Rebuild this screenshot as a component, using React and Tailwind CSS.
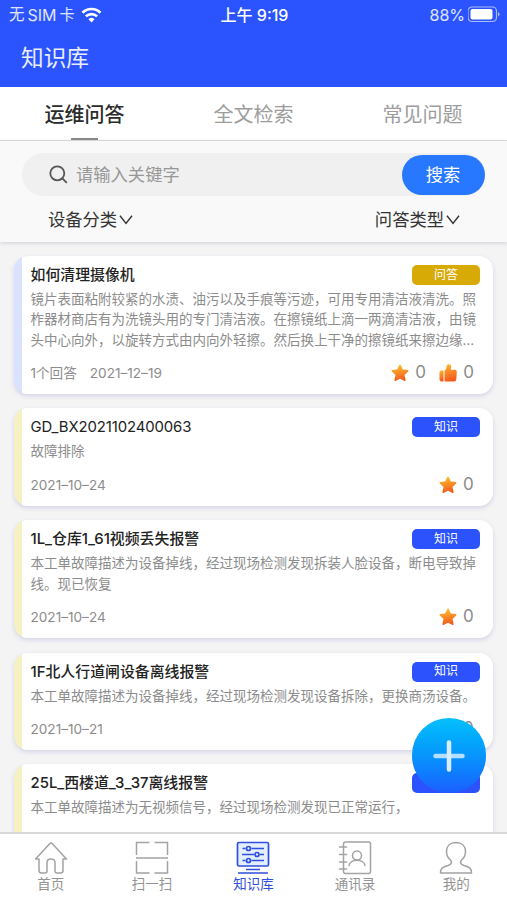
import React, { useState } from "react";

const FONT = "font-['Inter','Noto_Sans_CJK_SC',sans-serif]";

const tabs = ["运维问答", "全文检索", "常见问题"];

const records = [
  {
    title: "如何清理摄像机",
    body: "镜片表面粘附较紧的水渍、油污以及手痕等污迹，可用专用清洁液清洗。照\n柞器材商店有为洗镜头用的专门清洁液。在擦镜纸上滴一两滴清洁液，由镜\n头中心向外，以旋转方式由内向外轻擦。然后换上干净的擦镜纸来擦边缘…",
    date: "2021–12–19",
    answers: "1个回答",
    type: "问答",
    stars: 0,
    likes: 0,
  },
  {
    title: "GD_BX2021102400063",
    body: "故障排除",
    date: "2021–10–24",
    type: "知识",
    stars: 0,
  },
  {
    title: "1L_仓库1_61视频丢失报警",
    body: "本工单故障描述为设备掉线，经过现场检测发现拆装人脸设备，断电导致掉\n线。现已恢复",
    date: "2021–10–24",
    type: "知识",
    stars: 0,
  },
  {
    title: "1F北人行道闸设备离线报警",
    body: "本工单故障描述为设备掉线，经过现场检测发现设备拆除，更换商汤设备。",
    date: "2021–10–21",
    type: "知识",
    stars: 0,
  },
  {
    title: "25L_西楼道_3_37离线报警",
    body: "本工单故障描述为无视频信号，经过现场检测发现已正常运行，",
    type: "知识",
  },
];

function StarIcon() {
  return (
    <svg width="18" height="18" viewBox="0 0 18 18">
      <defs>
        <linearGradient id="star" x1="0" y1="0" x2="0.2" y2="1">
          <stop offset="0.1" stopColor="#fcbb30" />
          <stop offset="1" stopColor="#f4601c" />
        </linearGradient>
      </defs>
      <path
        d="M9 1.300l2.200 4.900 5.400.7-4 3.700 1.200 5.600L9 13.700l-4.800 2.500 1.200-5.600-4-3.700 5.400-.7z"
        fill="url(#star)"
        stroke="url(#star)"
        strokeWidth="1.700"
        strokeLinejoin="round"
      />
    </svg>
  );
}

function ThumbIcon() {
  return (
    <svg width="18" height="18" viewBox="0 0 18 18">
      <defs>
        <linearGradient id="thumb" x1="0" y1="0" x2="0.2" y2="1">
          <stop offset="0.1" stopColor="#fbb030" />
          <stop offset="1" stopColor="#f65a1a" />
        </linearGradient>
      </defs>
      <g fill="url(#thumb)">
        <path d="M2 6.500H4.500V17.500H2.500Q.5 17.500 .5 15.500V8Q.5 6.500 2 6.500z" />
        <path d="M5.500 6.500Q7.600 4.800 7.600 2.200Q7.700 .2 9.600 .2Q12.300 .3 12.100 3.300Q12 4.600 11.700 5.800H16Q17.900 5.900 17.800 7.800L17.300 15.400Q17 17.500 15 17.500H5.500z" />
      </g>
    </svg>
  );
}

function Chevron() {
  return (
    <svg width="14" height="10" viewBox="0 0 14 10" fill="none" stroke="#333" strokeWidth="1.400">
      <path d="M1 .8l6 7.600L13 .8" />
    </svg>
  );
}

function StatusBar() {
  return (
    <div className="grid h-[30px] grid-cols-3 items-center pl-[9px] pr-[6px] text-[16px] text-white/85">
      <div className="flex items-center whitespace-nowrap">
        <span className="text-[15.500px]">无</span>
        <span className="ml-[3px]">SIM</span>
        <span className="ml-[3px] text-[15px]">卡</span>
        <svg className="ml-[6px]" width="21" height="16" viewBox="0 0 21 16" fill="none" stroke="#fff" strokeWidth="2.700">
          <path d="M1.500 5.800a12.600 12.600 0 0 1 18 0" />
          <path d="M4.900 9.400a7.900 7.900 0 0 1 11.200 0" />
          <path d="M10.500 15.500l-3-3.300a4.300 4.300 0 0 1 6 0z" fill="#fff" stroke="none" />
        </svg>
      </div>
      <div className="pr-px text-center font-medium text-white">上午 9:19</div>
      <div className="flex items-center justify-end">
        <span>88%</span>
        <svg className="ml-[3px] mb-px" width="33" height="17" viewBox="0 0 33 17">
          <rect x="0" y="1" width="28.500" height="14.500" rx="4" fill="none" stroke="#a9baff" strokeWidth="1.200" />
          <rect x="2.500" y="3" width="22" height="10.500" rx="2" fill="#fff" />
          <path d="M30 6v4.500q1.500-.7 1.500-2.200t-1.500-2.300z" fill="#a9baff" />
        </svg>
      </div>
    </div>
  );
}

function RecordCard({ item }) {
  const isQuestion = item.type === "问答";
  const isCode = /^\w+$/.test(item.title);

  return (
    <div
      className={`shrink-0 overflow-hidden rounded-[14px] pl-[8px] shadow-[0_2px_4px_rgba(170,170,215,0.45)] ${
        isQuestion ? "bg-[#dbe2fd]" : "bg-[#f5f1c3]"
      }`}
    >
      <div className="bg-white pb-[11.200px] pl-[8.500px] pr-[13px] pt-[9px]">
        <div className="flex h-5 items-start justify-between">
          <h3
            className={`whitespace-nowrap text-[14.900px] leading-[20px] text-[#222] ${
              isCode ? "font-normal tracking-[-0.1px]" : "font-medium"
            }`}
          >
            {item.title}
          </h3>
          <span
            className={`flex h-[20px] w-[68px] items-center justify-center rounded-[5px] pb-px text-[12px] text-white ${
              isQuestion ? "bg-[#d8aa06]" : "bg-[#2b52fd]"
            }`}
          >
            {item.type}
          </span>
        </div>

        <p className="mt-[4px] whitespace-pre text-[13.500px] leading-[20.300px] text-[#8c8c8c]">
          {item.body}
        </p>

        <div className="mt-[13px] flex h-5 items-center justify-between text-[#8c8c8c]">
          <div className="flex gap-[13px] text-[13.600px]">
            {item.answers && <span>{item.answers}</span>}
            {item.date && <span>{item.date}</span>}
          </div>
          <div className="flex items-center gap-[13px] pr-[6px] text-[17px]">
            <span className="flex min-w-[35px] items-center gap-[6px]">
              <StarIcon />
              {item.stars}
            </span>
            {item.likes !== undefined && (
              <span className="flex items-center gap-[6px]">
                <ThumbIcon />
                {item.likes}
              </span>
            )}
          </div>
        </div>
      </div>
    </div>
  );
}

function HomeIcon() {
  return (
    <svg width="34" height="34" viewBox="0 0 34 34" fill="none" stroke="#a3a3a3" strokeWidth="1.500" strokeLinejoin="round">
      <path d="M5 18H1.500L16.200 2.200Q17 1.400 17.800 2.200L32.500 18H29V29.500Q29 32 26.500 32H23Q21 32 21 30V21.500Q21 18 17 18T13 21.500V30Q13 32 11 32H7.500Q5 32 5 29.500V18z" />
    </svg>
  );
}

function ScanIcon() {
  return (
    <svg width="34" height="34" viewBox="0 0 34 34" fill="none" stroke="#a3a3a3" strokeWidth="1.500">
      <path d="M14.500 1.500H1.500V14M19.500 1.500H32.500V14M14.500 32H1.500V20M19.500 32H32.500V20M1 17H33" />
    </svg>
  );
}

function LibraryIcon() {
  return (
    <svg width="34" height="34" viewBox="0 0 34 34" fill="none" stroke="#304fdc" strokeWidth="1.700">
      <rect x="1.500" y="1.500" width="31" height="23.500" rx="1.500" fill="#e3efff" />
      <path d="M6.500 7.500h3M15.500 7.500h12.500M6 13.500h12M24 13.500h4M6.500 19.500h3M15.500 19.500h12.500" />
      <circle cx="12.500" cy="7.500" r="2" />
      <circle cx="21" cy="13.500" r="2" />
      <circle cx="12.500" cy="19.500" r="2" />
      <path d="M10 28.500h14M2 32h30" />
    </svg>
  );
}

function ContactsIcon() {
  return (
    <svg width="34" height="34" viewBox="0 0 34 34" fill="none" stroke="#a3a3a3" strokeWidth="1.500" strokeLinecap="round">
      <rect x="5.500" y="1" width="27" height="31.500" rx="2" />
      <path d="M1.500 6h7M1.500 13.500h7M1.500 21h7M1.500 28h7" />
      <circle cx="19" cy="14.500" r="4.500" />
      <path d="M11 24.500C12 17.500 26 17.500 27 24.500" />
    </svg>
  );
}

function UserIcon() {
  return (
    <svg width="34" height="34" viewBox="0 0 34 34" fill="none" stroke="#a3a3a3" strokeWidth="1.500" strokeLinejoin="round">
      <path d="M17 1.500C11 1.500 7.500 5 7.500 10.500C7.500 14.500 9 17 11.500 19C13.500 21.500 12 23.500 9 24.500C4 26 1.500 27 1.500 32H32.500C32.500 27 30 26 25 24.500C22 23.500 20.500 21.500 22.500 19C25 17 26.500 14.500 26.500 10.500C26.500 5 23 1.500 17 1.500z" />
    </svg>
  );
}

const navItems = [
  { label: "首页", Icon: HomeIcon },
  { label: "扫一扫", Icon: ScanIcon },
  { label: "知识库", Icon: LibraryIcon, active: true },
  { label: "通讯录", Icon: ContactsIcon },
  { label: "我的", Icon: UserIcon },
];

function App() {
  const [activeTab, setActiveTab] = useState(0);

  return (
    <div className={`relative flex h-[900px] w-full flex-col overflow-hidden bg-[#f4f4f5] ${FONT}`}>
      {/* Header */}
      <header className="h-[87px] shrink-0 bg-[#2b54ff]">
        <StatusBar />
        <h1 className="pl-[21px] pt-[11px] text-[22.700px] leading-[34px] text-white/90">
          知识库
        </h1>
      </header>

      {/* Tabs */}
      <div className="grid h-[54px] shrink-0 grid-cols-3 border-b border-[#dcdcdc] bg-white">
        {tabs.map((tab, i) => (
          <button
            key={tab}
            onClick={() => setActiveTab(i)}
            className={`flex flex-col items-center justify-between pt-[13px] text-[20px] leading-[30px] ${
              activeTab === i ? "font-medium text-[#2b2b2b]" : "text-[#9c9c9c]"
            }`}
          >
            {tab}
            {activeTab === i && <span className="h-[2px] w-[27px] bg-[#888]" />}
          </button>
        ))}
      </div>

      {/* Search */}
      <div className="z-10 h-[101px] shrink-0 bg-[#f9f9f9] px-[22px] pt-[12px] shadow-[0_1px_4px_rgba(150,150,175,0.4)]">
        <div className="flex h-[43px] items-center rounded-full bg-[#f0f0f0] pl-[27px]">
          <svg width="19" height="19" viewBox="0 0 19 19" fill="none" stroke="#555" strokeWidth="1.800">
            <circle cx="8.300" cy="8.300" r="7" />
            <path d="M13.300 13.300l4.500 4.500" />
          </svg>
          <input
            type="text"
            placeholder="请输入关键字"
            className="ml-[8px] min-w-0 flex-1 bg-transparent text-[17.300px] outline-none placeholder:text-[#979797]"
          />
          <button className="mr-[0.500px] h-[40px] w-[83px] rounded-full bg-[#2878ff] text-[17.300px] text-white">
            搜索
          </button>
        </div>
        <div className="flex justify-between pl-[26px] pr-[25px] pt-[11px] text-[17.300px] leading-[26px] text-[#333]">
          <span className="flex items-center gap-[2px]">设备分类<Chevron /></span>
          <span className="flex items-center gap-[2px]">问答类型<Chevron /></span>
        </div>
      </div>

      {/* List */}
      <main className="flex min-h-0 flex-1 flex-col gap-[14.400px] overflow-hidden px-[14px] pt-[14px]">
        {records.map((item) => (
          <RecordCard key={item.title} item={item} />
        ))}
      </main>

      {/* Add button */}
      <button className="absolute left-[412px] top-[718px] z-20 flex h-[75px] w-[74px] items-center justify-center rounded-full bg-linear-to-b from-[#08c0fb] via-[#0895fc] to-[#1d5dff]">
        <svg width="32" height="32" viewBox="0 0 32 32" strokeLinecap="round" strokeWidth="4.500">
          <path d="M2.500 16h27" stroke="#b4e0ff" />
          <path d="M16 2.500v27" stroke="#d6eeff" />
        </svg>
      </button>

      {/* Bottom nav */}
      <nav className="z-10 grid h-[68px] shrink-0 grid-cols-5 border-t-2 border-[#d9d9d9] bg-white">
        {navItems.map(({ label, Icon, active }) => (
          <div
            key={label}
            className={`flex flex-col items-center pt-[7px] text-[13.500px] leading-[18px] ${
              active ? "text-[#304fdc]" : "text-[#939393]"
            }`}
          >
            <Icon />
            <span>{label}</span>
          </div>
        ))}
      </nav>
    </div>
  );
}

export default App;
